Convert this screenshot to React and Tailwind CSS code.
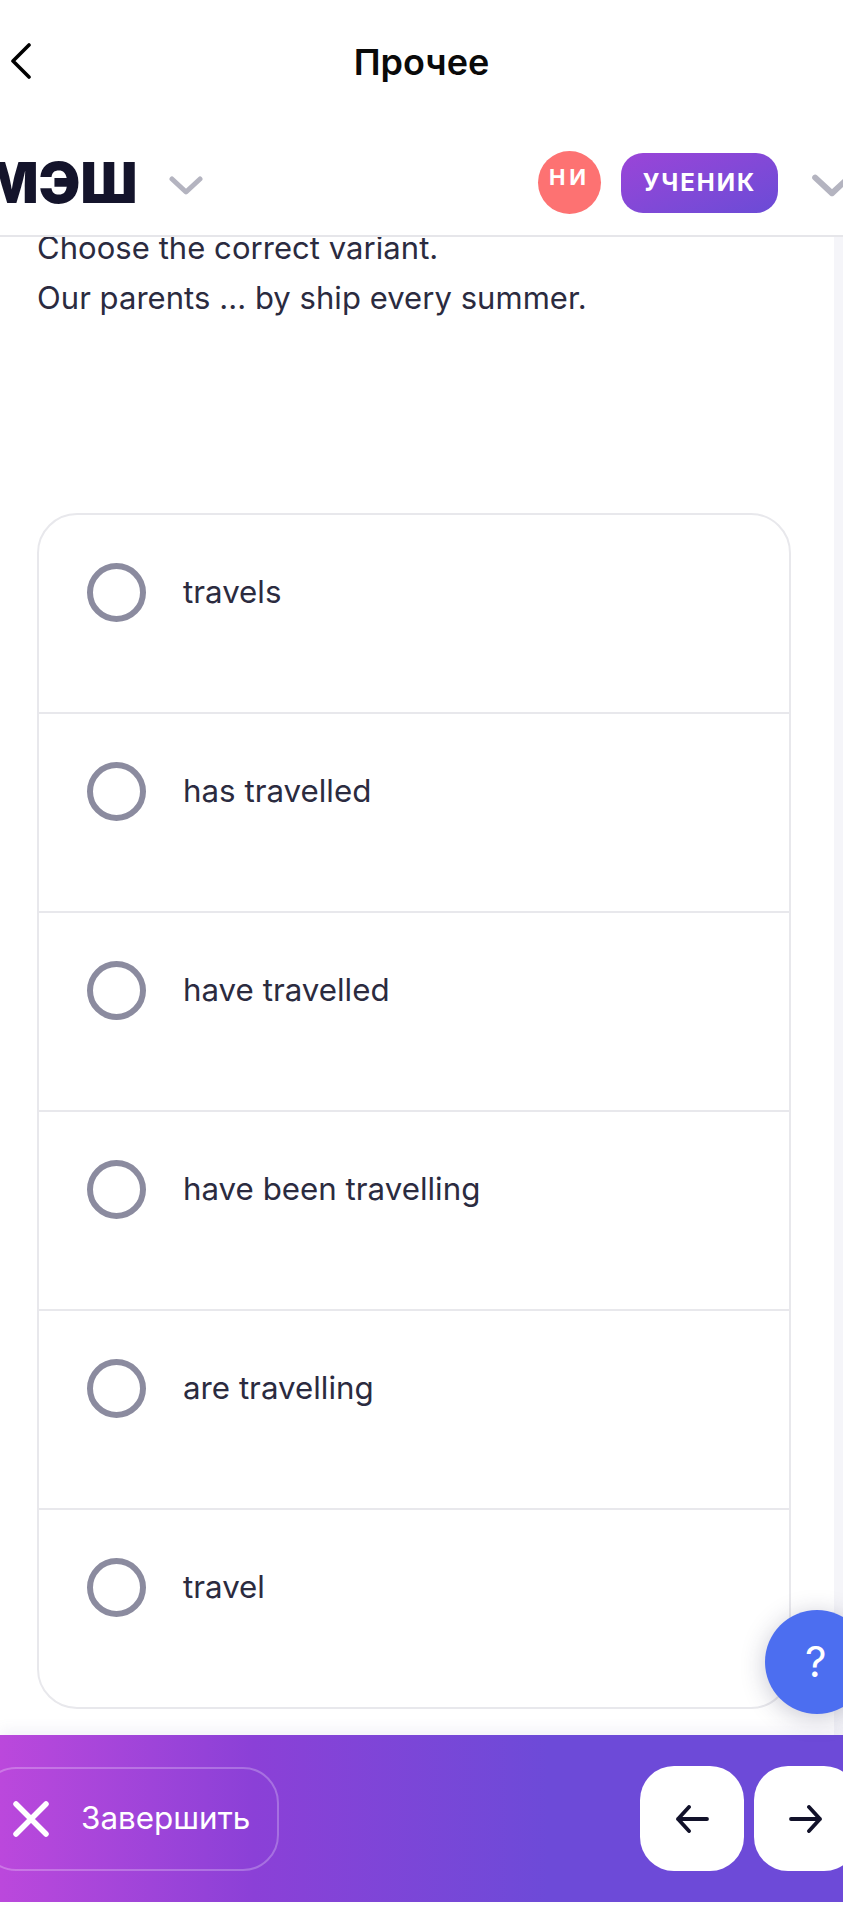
import React from "react";

const options = ["travels", "has travelled", "have travelled", "have been travelling", "are travelling", "travel"];

function Chevron({ className }) {
  return (
    <svg className={className} viewBox="0 0 34 20" fill="none" stroke="#b4b4c0" strokeWidth="5" strokeLinecap="round" strokeLinejoin="round">
      <path d="M3 3 L17 16 L31 3" />
    </svg>
  );
}

function ArrowBtn({ dir }) {
  return (
    <button className="h-[105px] w-[104px] shrink-0 rounded-[34px] bg-white flex items-center justify-center">
      <svg width="34" height="28" viewBox="0 0 34 28" fill="none" stroke="#12122a" strokeWidth="3.8" strokeLinecap="round" strokeLinejoin="round">
        {dir === "left" ? <path d="M32 14 H3 M14 2 L3 14 L14 26" /> : <path d="M2 14 H31 M20 2 L31 14 L20 26" />}
      </svg>
    </button>
  );
}

export default function App() {
  return (
    <div className="relative w-[843px] h-[1920px] overflow-hidden bg-white flex flex-col text-[#2b2b3f] font-['Inter',sans-serif]">
      <header className="h-[124px] shrink-0 relative flex items-center justify-center">
        <svg className="absolute left-[9px] top-[43px]" width="24" height="36" viewBox="0 0 24 36" fill="none" stroke="#000" strokeWidth="3.6" strokeLinecap="round" strokeLinejoin="round">
          <path d="M20 2 L4 18 L20 34" />
        </svg>
        <h1 className="text-[36px] leading-none font-semibold text-[#0a0a0a]">Прочее</h1>
      </header>

      <div className="h-[113px] shrink-0 flex items-center border-b-2 border-[#e6e6ea] pt-[6px]">
        <span className="ml-[-15px] text-[56px] leading-none font-black text-[#14142b]">МЭШ</span>
        <Chevron className="ml-[32px] mt-[6px] w-[34px] h-[20px]" />
        <div className="ml-auto flex items-center">
          <div className="w-[63px] h-[63px] rounded-full bg-[#fd7272] flex justify-center pt-[11px] text-white font-bold text-[22px] leading-[30px] tracking-[4px]">НИ</div>
          <div className="ml-[20px] w-[157px] h-[60px] rounded-[22px] bg-gradient-to-br from-[#9a44d8] to-[#6a4bd6] flex items-center justify-center text-white font-bold text-[24px] tracking-[2px]">УЧЕНИК</div>
          <Chevron className="ml-[32px] mr-[-11px] mt-[6px] w-[44px] h-[24px] shrink-0" />
        </div>
      </div>

      <div className="flex-1 min-h-0 flex overflow-hidden">
        <main className="flex-1 min-w-0 pl-[37px]">
          <div className="text-[31px] leading-[50px] mt-[-14px] tracking-[0.05px]">
            <p>Choose the correct variant.</p>
            <p>Our parents ... by ship every summer.</p>
          </div>
          <div className="mt-[190px] w-[754px] rounded-[40px] border-2 border-[#e8e8ec] divide-y-2 divide-[#e8e8ec] bg-white">
            {options.map((o) => (
              <div key={o} className="h-[199px] last:h-[197px] flex items-start pl-[48px] pt-[48px]">
                <span className="w-[59px] h-[59px] rounded-full border-[6px] border-[#8b8b9f] shrink-0" />
                <span className="ml-[37px] text-[31.3px] leading-[58px]">{o}</span>
              </div>
            ))}
          </div>
        </main>
        <div className="w-[9px] shrink-0 bg-[#f5f5f9]" />
      </div>

      <footer className="h-[167px] shrink-0 bg-gradient-to-r from-[#bb48dc] via-[#8b40d7] via-30% to-[#6d4ad8] to-65% flex items-center mb-[18px] shadow-[0_-6px_12px_rgba(120,100,180,0.08)]">
        <button className="ml-[-20px] h-[104px] w-[299px] rounded-[36px] border-2 border-white/25 flex items-center text-white text-[31.4px] leading-none pl-[31px]">
          <svg width="36" height="36" viewBox="0 0 36 36" fill="none" stroke="#fff" strokeWidth="5.5" strokeLinecap="round">
            <path d="M3 3 L33 33 M33 3 L3 33" />
          </svg>
          <span className="ml-[32px]">Завершить</span>
        </button>
        <div className="ml-auto flex items-center gap-[10px] mr-[-15px]">
          <ArrowBtn dir="left" />
          <ArrowBtn dir="right" />
        </div>
      </footer>

      <button className="absolute left-[765px] top-[1610px] w-[104px] h-[104px] rounded-full bg-[#4c6ef0] shadow-[0_4px_24px_rgba(40,40,80,0.25)] flex items-center justify-start pl-[40px] text-white text-[42px] font-normal leading-none">?</button>
    </div>
  );
}
